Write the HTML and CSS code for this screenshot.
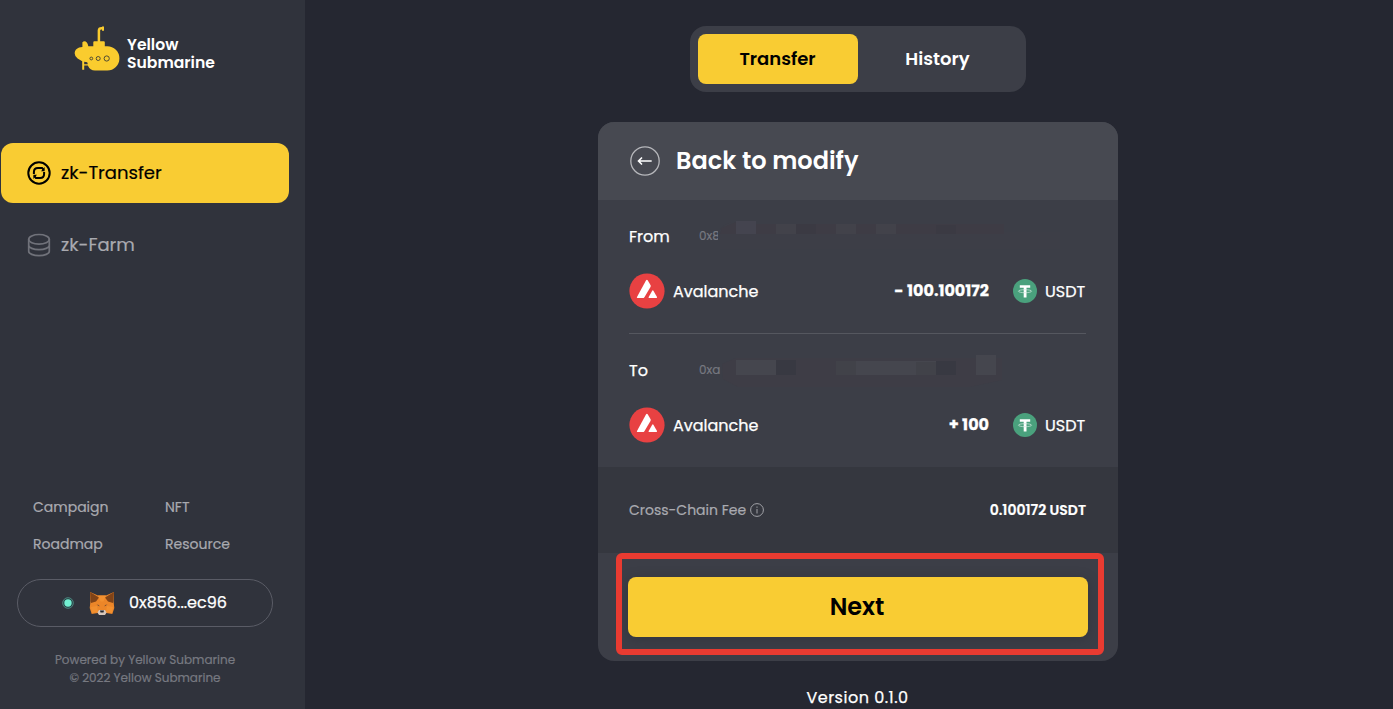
FILE: index.html
```html
<!DOCTYPE html>
<html lang="en">
<head>
<meta charset="utf-8">
<title>Yellow Submarine</title>
<link rel="stylesheet" href="styles.css">
</head>
<body>
<svg class="defs" aria-hidden="true">
  <symbol id="avax" viewBox="0 0 36 36">
    <circle cx="18" cy="18" r="17.6" fill="#e84142"/>
    <path d="M17.1 7.300 Q17.900 6.200 18.700 7.300 L21.600 12.200 Q22 13 21.500 13.900 L15.400 24.200 Q14.800 25.100 13.800 25.100 H8.600 Q7.400 25 8 23.900 Z" fill="#fff"/>
    <path d="M23.200 17.700 Q23.800 17 24.400 17.700 L28 23.900 Q28.400 25 27.200 25.100 H20.200 Q19.100 25 19.700 23.900 Z" fill="#fff"/>
  </symbol>
  <symbol id="usdt" viewBox="0 0 24 24">
    <circle cx="12" cy="12" r="12" fill="#4aa17d"/>
    <path d="M6.800 6.200H17.200V8.800H13.500V18.600H10.700V8.800H6.800Z" fill="#fff"/>
    <ellipse cx="12" cy="12.200" rx="6.600" ry="1.500" fill="none" stroke="#d5ebe2" stroke-width=".7"/>
  </symbol>
</svg>
<div class="app">
  <aside class="sidebar">
    <div class="brand">
      <svg class="sub" width="46" height="46" viewBox="0 0 46 46">
        <path d="M24.900 16V4.500Q25 2.300 27.500 2.300H29" fill="none" stroke="#facc2e" stroke-width="2.500"/>
        <path d="M28 .4h2v4.300h-2Z" fill="#facc2e"/>
        <path d="M20.300 15.200H29.800Q30.800 15.200 30.800 16.200V20.300H33.300A12 12 0 0 1 33.300 44.500H21Q16 44.500 13.800 39.500H10.200V43.700H8.200V35.200Q5.500 33.600 3.600 32.600Q.7 30.500.7 27.600C.7 23.500 3.500 21.400 8.400 21V16.200C10.500 14.200 13.600 15.500 14.300 20.300H19.300V16.200Q19.300 15.200 20.300 15.200Z" fill="#facc2e"/>
        <path d="M10.200 35.800l3 .4.600 2h-3.600Z" fill="#30333c"/>
        <g fill="none" stroke="#504b32" stroke-width="1"><circle cx="17.300" cy="32.500" r="1.400"/><circle cx="24.200" cy="32.500" r="2"/><circle cx="32.700" cy="32.500" r="2.600"/></g>
      </svg>
      <div class="brand-name">Yellow<br>Submarine</div>
    </div>
    <nav class="nav">
      <a class="nav-item active">
        <svg width="24" height="24" viewBox="0 0 24 24" fill="none" stroke="#000" stroke-width="2"><circle cx="12" cy="12" r="10.700"/><path d="M6.900 13V11q0-4 4-4h4.200l1.600 2M17.100 11v2q0 4-4 4H8.900l-1.600-2"/><path d="M17.600 6v4.200h-3.600ZM6.400 18v-4.200h3.600Z" fill="#000" stroke="none"/></svg>
        <span>zk-Transfer</span>
      </a>
      <a class="nav-item">
        <svg width="24" height="24" viewBox="0 0 24 24" fill="none" stroke="#70727a" stroke-width="1.700"><ellipse cx="12" cy="6.300" rx="10.300" ry="4.800"/><path d="M1.700 6.300v12c0 2.400 4.600 4.400 10.300 4.400s10.300-2 10.300-4.400v-12M1.700 12.300c0 2.400 4.600 4.400 10.300 4.400s10.300-2 10.300-4.400"/></svg>
        <span>zk-Farm</span>
      </a>
    </nav>
    <div class="links">
      <span>Campaign</span><span>NFT</span>
      <span>Roadmap</span><span>Resource</span>
    </div>
    <div class="wallet">
      <svg width="12" height="12" viewBox="0 0 12 12"><circle cx="6" cy="6" r="5.300" fill="#263f43" stroke="#559b8f" stroke-width=".8"/><circle cx="6" cy="6" r="3.700" fill="#72f1d2"/></svg>
      <svg class="fox" width="26" height="24" viewBox="0 0 26 24">
        <path d="M1 0 9 3.500h8L25 0l-.5 9 .8 7-2 6-6-1-2.300 2h-4l-2.300-2-6 1-2-6 .8-7Z" fill="#ec8628"/>
        <path d="M1 0 10 5.500 7 9.500 2 11ZM25 0 16 5.500l3 4 5 1.500Z" fill="#804317"/>
        <path d="M9 3.500h8l-2.500 6h-3ZM2 15l6-1 1 6-6 1ZM24 15l-6-1-1 6 6 1Z" fill="#f2902f"/>
        <path d="m7.500 12.500 2.500.500.500 1.500ZM18.500 12.500l-2.500.5-.5 1.500Z" fill="#6d4a35"/>
        <path d="M10 18h6l1.500 2.500-1.500 2.500h-6l-1.500-2.500Z" fill="#d7c7bb"/><path d="M11 18.500h4l-.5 2h-3Z" fill="#24272e"/>
      </svg>
      <span class="address">0x856...ec96</span>
    </div>
    <footer class="copyright">Powered by Yellow Submarine<br>© 2022 Yellow Submarine</footer>
  </aside>
  <main class="main">
    <div class="tabs"><button class="tab selected">Transfer</button><button class="tab">History</button></div>
    <section class="card">
      <header class="card-head">
        <svg width="30" height="30" viewBox="0 0 30 30" fill="none" stroke="#fff"><circle cx="15" cy="15" r="14.200" stroke="#b6b7bb" stroke-width="1.300"/><path d="M21.700 15H9M12 11.500 8.500 15l3.500 3.500" stroke-width="1.600"/></svg>
        <h1>Back to modify</h1>
      </header>
      <div class="route">
        <div class="account"><span class="label">From</span><span class="hash short">0x8</span>
          <svg class="mask" width="350" height="40" viewBox="0 0 350 40">
            <path d="M0 14Q5 6 16 6V16H340V33H0Z" fill="#3d3e47"/>
            <path d="M2 12 16 6V18H0ZM36 8H284V18H36Z" fill="#3e3c45"/><path d="M16 5h20v13H16Z" fill="#44444f"/><path d="M56 8h20v10H56ZM116 8h20v10h-20ZM156 8h20v10h-20Z" fill="#42424a"/><path d="M76 8h20v10H76ZM216 9h20v9h-20Z" fill="#3b3a43"/>
          </svg>
        </div>
        <div class="amount-row"><svg class="chain" width="36" height="36"><use href="#avax"/></svg><span class="name">Avalanche</span><span class="amount">- 100.100172</span><svg class="coin" width="24" height="24"><use href="#usdt"/></svg><span class="unit">USDT</span></div>
        <div class="divider"></div>
        <div class="account"><span class="label">To</span><span class="hash">0xa</span>
          <svg class="mask" width="350" height="40" viewBox="0 0 350 40">
            <path d="M2 14 16 8H282V30L250 37H18L3 29Z" fill="#3e3d46"/>
            <path d="M16 10h40v15H16ZM136 11h80v14h-80ZM256 5h20v20h-20Z" fill="#45464e"/><path d="M116 11h20v14h-20ZM196 12h20v13h-20Z" fill="#414249"/><path d="M56 10h20v15H56ZM216 11h20v14h-20Z" fill="#383942"/>
          </svg>
        </div>
        <div class="amount-row"><svg class="chain" width="36" height="36"><use href="#avax"/></svg><span class="name">Avalanche</span><span class="amount">+ 100</span><svg class="coin" width="24" height="24"><use href="#usdt"/></svg><span class="unit">USDT</span></div>
      </div>
      <div class="fee"><span class="fee-name">Cross-Chain Fee</span><svg width="14" height="14" viewBox="0 0 14 14" fill="none" stroke="#a1a2a7"><circle cx="7" cy="7" r="6.400"/><path d="M7 6v4.500M7 3.500v1.300"/></svg><span class="fee-value">0.100172 USDT</span></div>
      <div class="action"><button class="next">Next</button><div class="highlight"></div></div>
    </section>
    <div class="version">Version 0.1.0</div>
  </main>
</div>
</body>
</html>
```
FILE: styles.css
```css
* { box-sizing: border-box; }
body { margin: 0; background: #252731; color: #fff; font-family: Poppins, Inter, "Noto Sans", sans-serif; overflow: hidden; }
button { border: 0; padding: 0; font: inherit; color: inherit; background: none; }
span { white-space: nowrap; }
svg { display: block; flex: none; }
.defs { position: absolute; width: 0; height: 0; }
.app { display: flex; height: 709px; }
.sidebar { width: 305px; flex: none; background: #30333c; display: flex; flex-direction: column; }
.brand { height: 143px; padding: 26px 0 0 74px; display: flex; align-items: flex-start; gap: 7px; }
.brand-name { font-size: 15.6px; font-weight: 600; line-height: 17.5px; padding-top: 10px; }
.nav { display: flex; flex-direction: column; gap: 12px; padding-left: 1px; }
.nav-item { width: 288px; height: 60px; border-radius: 12px; padding-left: 26px; display: flex; align-items: center; gap: 10px; font-size: 18px; font-weight: 400; color: #a9aab0; }
.nav-item span { padding-bottom: 2px; -webkit-text-stroke: .2px; }
.nav-item.active { background: #f9cc33; color: #000; }
.links { margin-top: auto; padding-left: 33px; display: grid; grid-template-columns: 132px 1fr; row-gap: 15px; font-size: 14px; line-height: 22px; font-weight: 400; color: #a9aab0; -webkit-text-stroke: .2px; }
.wallet { margin: 24px 0 0 17px; width: 256px; height: 48px; flex: none; border: 1px solid #5a5c66; border-radius: 24px; display: flex; align-items: center; padding-left: 44px; }
.fox { margin-left: 15px; margin-top: 1px; }
.address { margin-left: 14px; padding-bottom: 2px; font-size: 16px; font-weight: 400; -webkit-text-stroke: .25px; }
.copyright { width: 290px; margin: 24px 0 22px; text-align: center; font-size: 12px; line-height: 18px; font-weight: 400; color: #777981; -webkit-text-stroke: .2px; }
.main { flex: 1; padding: 26px 0 0 18px; display: flex; flex-direction: column; align-items: center; }
.tabs { width: 336px; height: 66px; flex: none; padding: 8px; border-radius: 16px; background: #3c3e47; display: flex; }
.tab { width: 160px; height: 50px; padding: 0 1px 2px 0; border-radius: 8px; font-size: 18px; font-weight: 600; }
.tab.selected { background: #f9cc33; color: #000; }
.card { width: 520px; height: 539px; flex: none; margin-top: 30px; border-radius: 16px; background: #3c3e47; overflow: hidden; }
.card-head { height: 78px; background: #474951; padding-left: 32px; display: flex; align-items: center; gap: 16px; }
h1 { margin: 0; font-size: 24px; line-height: 30px; font-weight: 600; }
.route { height: 267px; padding: 0 32px 0 31px; }
.account { height: 72px; display: flex; align-items: center; }
.label { width: 70px; flex: none; font-size: 16px; font-weight: 400; -webkit-text-stroke: .25px; }
.hash { width: 23px; flex: none; overflow: hidden; font-size: 12px; color: #777981; -webkit-text-stroke: .2px; }
.hash.short { width: 19px; margin-right: 4px; }
.mask { margin-left: -2px; }
.amount-row { height: 38px; display: flex; align-items: center; font-size: 16px; font-weight: 400; -webkit-text-stroke: .25px; }
.name { margin-left: 8px; }
.amount { margin-left: auto; margin-top: -2px; font-weight: 700; }
.coin { margin-left: 24px; }
.unit { margin-left: 8px; width: 41px; }
.divider { height: 1px; margin-top: 23px; background: #55575f; }
.fee { height: 86px; padding: 0 32px 0 31px; background: #35373f; display: flex; align-items: center; font-size: 14px; font-weight: 400; color: #a9aab0; -webkit-text-stroke: .2px; }
.fee svg { margin-left: 4px; }
.fee-value { margin-left: auto; color: #fff; font-weight: 600; }
.action { height: 108px; position: relative; padding: 24px 30px; }
.next { width: 460px; height: 60px; padding: 0 2px 2px 0; border-radius: 8px; background: #f9cc33; color: #000; font-size: 24px; font-weight: 600; box-shadow: 0 2px 12px #25273166; }
.highlight { position: absolute; left: 18px; top: 0; width: 488px; height: 102px; border: 6px solid #e93b31; border-radius: 6px; }
.version { margin-top: 25px; padding-right: 1px; font-size: 16px; line-height: 24px; font-weight: 400; letter-spacing: .5px; -webkit-text-stroke: .25px; }
```
